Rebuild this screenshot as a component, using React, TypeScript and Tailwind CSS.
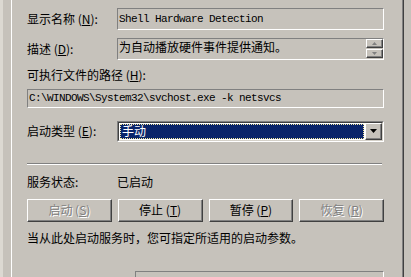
// 服务属性对话框 - 常规页（经典 Windows 风格）

const cjk = "font-['Noto_Sans_CJK_SC','Liberation_Sans',sans-serif]";
const mono = "font-['Liberation_Mono',monospace] text-[11px] tracking-[-0.6px]";

const sunken = 'border border-t-[#808080] border-l-[#808080] border-b-white border-r-white';
const raised =
  'border border-t-white border-l-white border-b-[#404040] border-r-[#404040] shadow-[inset_-1px_-1px_0_#808080]';

function Label({ text, hotkey, className = '' }: { text: string; hotkey?: string; className?: string }) {
  return (
    <span className={`h-[14px] leading-[14px] whitespace-nowrap ${className}`}>
      {text}
      {hotkey && (
        <>
          {' ('}
          <span className="underline">{hotkey}</span>
          {'):'}
        </>
      )}
    </span>
  );
}

function SpinButton({ up }: { up: boolean }) {
  return (
    <div className={`${raised} w-[17px] h-[9px] bg-[#c6c2bb] flex items-center justify-center`}>
      <svg width="5" height="3" viewBox="0 0 5 3">
        {up ? <path d="M0 3 L2.5 0 L5 3 Z" fill="#808080" /> : <path d="M0 0 L5 0 L2.5 3 Z" fill="#808080" />}
      </svg>
    </div>
  );
}

function ActionButton({ text, hotkey, disabled = false }: { text: string; hotkey: string; disabled?: boolean }) {
  return (
    <div
      className={`${raised} h-[23px] flex items-center justify-center ${
        disabled ? 'text-[#808080] [text-shadow:1px_1px_0_#ffffff]' : 'text-black'
      }`}
    >
      <span className="leading-[14px]">
        {text}
        {' ('}
        <span className="underline">{hotkey}</span>
        {')'}
      </span>
    </div>
  );
}

export default function App() {
  return (
    <div className={`w-[411px] h-[277px] overflow-hidden bg-[#c6c2bb] flex text-[12px] text-black ${cjk}`}>
      {/* 窗口左边缘 */}
      <div className="w-[3px] bg-[#dcd9d2]" />
      <div className="w-[8px]" />

      {/* 属性页面板 */}
      <div className="w-[393px] h-full border-l border-l-white border-r border-r-[#404040] shadow-[inset_-1px_0_0_#808080] pl-[15px] pt-[8px] flex flex-col">
        {/* 显示名称 */}
        <div className="flex items-center h-[22px]">
          <Label text="显示名称" hotkey="N" className="w-[90px]" />
          <div className={`${sunken} w-[267px] h-[22px] flex items-center pl-[1px] ${mono}`}>
            Shell Hardware Detection
          </div>
        </div>

        {/* 描述 */}
        <div className="flex items-center h-[22px] mt-[8px]">
          <Label text="描述" hotkey="D" className="w-[90px]" />
          <div className={`${sunken} w-[267px] h-[22px] flex items-start`}>
            <span className="flex-1 leading-[14px] pt-[1px] pl-[1px]">为自动播放硬件事件提供通知。</span>
            <div className="flex flex-col gap-[1px] mt-[0px] mr-[0px]">
              <SpinButton up />
              <SpinButton up={false} />
            </div>
          </div>
        </div>

        {/* 可执行文件路径 */}
        <Label text="可执行文件的路径" hotkey="H" className="mt-[8px] block" />
        <div className={`${sunken} w-[357px] h-[21px] mt-[7px] flex items-center pl-[1px] ${mono}`}>
          C:\WINDOWS\System32\svchost.exe -k netsvcs
        </div>

        {/* 启动类型 */}
        <div className="flex items-center h-[21px] mt-[13px]">
          <Label text="启动类型" hotkey="E" className="w-[90px]" />
          <div className="w-[267px] h-[21px] border border-t-[#808080] border-l-[#808080] border-b-white border-r-white">
            <div className="h-full border border-t-[#404040] border-l-[#404040] border-b-[#d4d0c8] border-r-[#d4d0c8] bg-white flex items-center">
              <div className="flex-1 h-full p-[1px]">
                <div className="h-full bg-[#0a246a] text-white outline-1 outline-dotted outline-[#f5e9a0] -outline-offset-1 flex items-center pl-[2px] leading-[14px]">
                  手动
                </div>
              </div>
              <div className={`${raised} w-[17px] h-full bg-[#c6c2bb] flex items-center justify-center`}>
                <svg width="7" height="4" viewBox="0 0 7 4">
                  <path d="M0 0 L7 0 L3.5 4 Z" fill="#000" />
                </svg>
              </div>
            </div>
          </div>
        </div>

        {/* 分隔线 */}
        <div className="w-[355px] mt-[21px] border-t border-t-[#808080] border-b border-b-white" />

        {/* 服务状态 */}
        <div className="flex items-center h-[14px] mt-[10px]">
          <span className="w-[90px] leading-[14px]">服务状态:</span>
          <span className="leading-[14px]">已启动</span>
        </div>

        {/* 操作按钮 */}
        <div className="grid grid-cols-4 gap-[6px] w-[357px] mt-[10px]">
          <ActionButton text="启动" hotkey="S" disabled />
          <ActionButton text="停止" hotkey="T" />
          <ActionButton text="暂停" hotkey="P" />
          <ActionButton text="恢复" hotkey="R" disabled />
        </div>

        {/* 提示 */}
        <span className="mt-[9px] h-[14px] leading-[14px] whitespace-nowrap">
          当从此处启动服务时，您可指定所适用的启动参数。
        </span>

        {/* 启动参数 */}
        <div className={`${sunken} ml-[108px] w-[249px] h-[20px] mt-[26px] shrink-0`} />
      </div>
    </div>
  );
}
